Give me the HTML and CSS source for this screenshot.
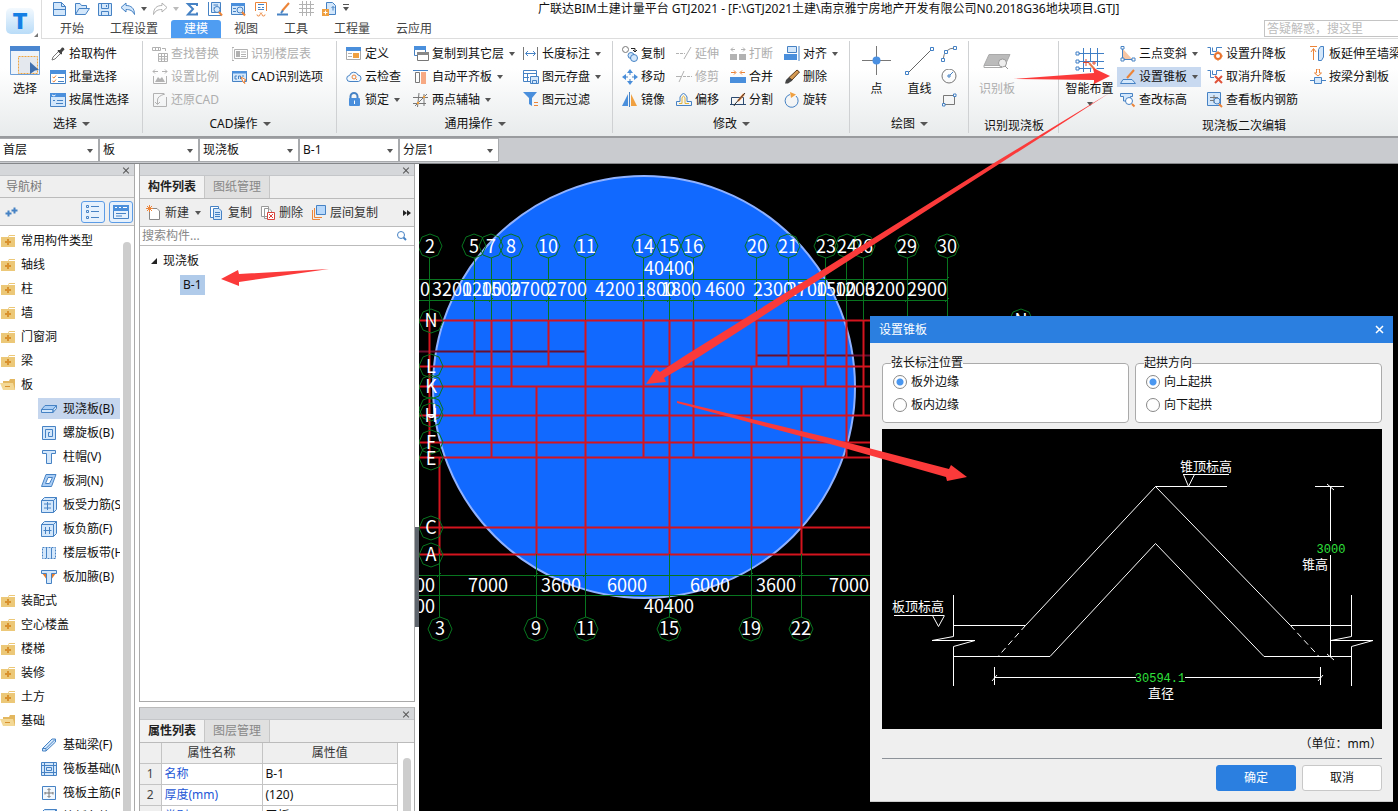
FILE: index.html
```html
<!DOCTYPE html>
<html lang="zh-CN">
<head>
<meta charset="UTF-8">
<meta name="viewport" content="width=device-width, initial-scale=1.0">
<title>广联达BIM土建计量平台 GTJ2021</title>
<link rel="stylesheet" href="styles.css">
</head>
<body>
<div class="app">

  <header class="header">
    <div class="logo">
      <svg class="logo-mark" width="30" height="28" viewBox="0 0 30 28">
        <defs><linearGradient id="logo-bg" x1="0" y1="0" x2="0" y2="1"><stop offset="0" stop-color="#f3f9fe"/><stop offset="1" stop-color="#b9dcf8"/></linearGradient></defs>
        <rect x="1" y="1" width="28" height="26" rx="5" fill="url(#logo-bg)"/>
        <text x="15" y="22" class="logo-letter">T</text>
      </svg>
      <svg class="logo-corner" width="4" height="4"><path d="M4 0V4H0Z" fill="#777"/></svg>
    </div>
    <div class="header-main">
      <div class="titlebar">
        <div class="quick">
          <svg class="icon" viewBox="0 0 16 16"><path class="lt" d="M2.500 1.500H10.500L14.500 5.500V14.500H2.500Z"/><path d="M10.500 1.500V5.500H14.500M2.500 8.500H14.500"/></svg>
          <svg class="icon" viewBox="0 0 16 16"><path class="lt" d="M1.500 13.500V2.500H6L7.500 4.500H12.500V7.500M1.500 13.500L5 7.500H15.500L11.500 13.500Z"/></svg>
          <svg class="icon" viewBox="0 0 16 16"><path class="lt" d="M1.500 2.500H14.500V14.500H1.500Z"/><path d="M4.500 2.500V7.500H11.500V2.500M4.500 14.500V10.500H11.500V14.500M9.500 4V6"/></svg>
          <svg class="icon" viewBox="0 0 16 16"><path class="lt" d="M1 6.500L6 2V4.500C11 4.500 14.500 7 14.500 13.500C12.500 9.500 10 8.500 6 8.500V11Z"/></svg>
          <i class="caret"></i>
          <svg class="icon" viewBox="0 0 16 16"><path class="gy" d="M15 6.500L10 2V4.500C5 4.500 1.500 7 1.500 13.500C3.500 9.500 6 8.500 10 8.500V11Z"/></svg>
          <i class="caret caret-off"></i>
          <svg class="icon" viewBox="0 0 16 16"><path class="thick" d="M13 5V3H4L9 8L4 13.500H13V11.500"/></svg>
          <svg class="icon" viewBox="0 0 16 16"><path class="lt" d="M4.500 1.500H13.500V11.500H4.500Z"/><path d="M1.500 1V14.500H14M6.500 4H11M6.500 7H9"/><circle class="lt" cx="10" cy="8.500" r="3"/><path class="or thick" d="M12 11L15 14.500"/></svg>
          <svg class="icon" viewBox="0 0 16 16"><path class="lt" d="M1.500 2.500H14.500V13.500H1.500Z"/><path class="bl" d="M1 2H15V5H1Z"/><path d="M3 7.500H6M3 10.500H6"/><circle class="lt" cx="10" cy="9" r="3"/><path class="or thick" d="M12 11L15 14.500"/></svg>
          <svg class="icon" viewBox="0 0 16 16"><path class="or" d="M2.500 10V1.500H13.500V10M4 13.500A1.500 1.500 0 1 0 7 13.500L9 11.500M12 13.500A1.500 1.500 0 1 1 9 13.500L7 11.500"/><path d="M5 3.500H11M5 6.500H7.500M9 6.500H11M5 8.500H11"/></svg>
          <svg class="icon" viewBox="0 0 16 16"><path class="or thick" d="M13 2L6 10"/><path class="thick" d="M1 13.500H12M5 12L7 9.500"/></svg>
          <svg class="icon" viewBox="0 0 16 16"><path class="gy" d="M3.500 0V15M7.500 0V15M11.500 0V15M0 3.500H15M0 7.500H15M0 11.500H15"/></svg>
          <svg class="icon" viewBox="0 0 16 16"><path class="lt" d="M4.500 1.500H10.500L13.500 4.500V13.500H4.500Z"/><path d="M11 9.500V5.500M9.500 7L11 5.500L12.500 7"/><path class="orf" d="M0 8H7V15H0Z"/><path stroke="#fff" d="M3.500 9.500V13.500M1.500 11.500H5.500"/></svg>
          <i class="caret caret-line"></i>
        </div>
        <div class="window-title">广联达BIM土建计量平台 GTJ2021 - [F:\GTJ2021土建\南京雅宁房地产开发有限公司N0.2018G36地块项目.GTJ]</div>
      </div>
      <div class="tabbar">
        <nav class="tabs">
          <button class="tab">开始</button>
          <button class="tab">工程设置</button>
          <button class="tab active">建模</button>
          <button class="tab">视图</button>
          <button class="tab">工具</button>
          <button class="tab">工程量</button>
          <button class="tab">云应用</button>
        </nav>
        <input class="help-search" type="text" placeholder="答疑解惑，搜这里" aria-label="答疑解惑">
      </div>
    </div>
  </header>

  <div class="ribbon">
    <section class="group g-select">
      <div class="group-body">
        <button class="big">
          <svg class="icon-big" viewBox="0 0 30 30"><path fill="#eef3f9" stroke="#6d9fd8" d="M.5 .5H29.500V28.500H.5Z"/><path fill="#4a86d0" d="M0 0H30V5H0Z"/><path fill="#e4e8ee" stroke="#f0a43c" stroke-dasharray="2 1" d="M8.500 10.500H27.500V27.500H8.500Z"/><path fill="#3f6fae" d="M20 16L29 24L25 24.500L20 28Z"/></svg>
          选择
        </button>
        <div class="tools">
          <button class="tool"><svg class="icon" viewBox="0 0 16 16"><path class="dk" d="M2 14L3 11L9 5L11 7L5 13Z"/><path class="ink" d="M8 4L10 4L12 1.500Q14 1 14.500 3.500L12 6V8L11 8.500L7.500 5Z"/></svg>拾取构件</button>
          <button class="tool"><svg class="icon" viewBox="0 0 16 16"><path fill="#fff" d="M.5 1.500H15.500V14.500H.5Z"/><path class="bl" d="M0 1H16V5H0Z"/><path class="or" d="M2.500 8L4 9L6 6.500M2.500 12L4 13L6 10.500"/><path d="M8 8.500H14M8 12.500H14"/></svg>批量选择</button>
          <button class="tool"><svg class="icon" viewBox="0 0 16 16"><path class="lt" d="M.5 1.500H15.500V14.500H.5Z"/><path class="bl" d="M0 1H16V5H0Z"/><path stroke="#fff" d="M2 3L4 4L5.500 3"/><path d="M3 8.500H5M7 8.500H13M6 11.500H13"/></svg>按属性选择</button>
        </div>
      </div>
      <div class="group-label">选择<i class="caret"></i></div>
    </section>

    <section class="group g-cad">
      <div class="group-body">
        <div class="tools">
          <button class="tool" disabled><svg class="icon" viewBox="0 0 16 16"><path class="gy" d="M.5 1.500H8.500V4.500H.5ZM3.500 1.500V4.500M6.500 1.500V4.500M10 2.500H13.500V5M6.500 7.500H15.500V15.500H6.500ZM6.500 10.500H15.500M6.500 13H15.500M9.500 7.500V15.500M12.500 7.500V15.500"/></svg>查找替换</button>
          <button class="tool" disabled><svg class="icon" viewBox="0 0 16 16"><path class="gy" d="M1 2.500H6M3 .5L1 2.500L3 4.500M15 2.500H10M13 .5L15 2.500L13 4.500M1.500 7V14.500H14.500V7"/><path class="gyf" d="M3 13L6 8L8 10L10 8L13 13Z"/></svg>设置比例</button>
          <button class="tool" disabled><svg class="icon" viewBox="0 0 16 16"><path class="gy" d="M12 1.500H1.500V14.500H14.500V5M5.500 12V8Q5.500 4 13 2M3 10L5.500 12.500L8 10"/></svg>还原CAD</button>
          <button class="tool" disabled><svg class="icon" viewBox="0 0 16 16"><path class="gy" d="M2.500 3.500H15.500V12.500H2.500ZM2 1.500H0V14.500H2M9 6H14M9 8.500H14M9 10.500H14"/><path class="gyf" d="M4 5H8V11H4Z"/></svg>识别楼层表</button>
          <button class="tool"><svg class="icon" viewBox="0 0 16 16"><path class="lt" d="M.5 2.500H14.500V12.500H.5Z"/><path class="bl" d="M0 2H15V4.500H0Z"/><path d="M5 7H3V10H5M6.500 10V7H8.500V10M10 7H12"/><path fill="#fff" class="or" d="M9 8L14 11L12 12L13 14.500L11 13Z"/></svg>CAD识别选项</button>
        </div>
      </div>
      <div class="group-label">CAD操作<i class="caret"></i></div>
    </section>

    <section class="group g-common">
      <div class="group-body">
        <div class="tools">
          <button class="tool"><svg class="icon" viewBox="0 0 16 16"><path fill="#fff" stroke="#aaa" d="M.5 1.500H14.500V13.500H.5Z"/><path class="bl" d="M0 1H15V5H0Z"/><path class="gyf" d="M2 7H6V8H2ZM2 10H6V11H2Z"/><path class="orf" d="M7 7H13V12H7Z"/></svg>定义</button>
          <button class="tool"><svg class="icon" viewBox="0 0 16 16"><path fill="#f2f8fe" d="M4 12.500A3 3 0 0 1 3.500 6.500A4.500 4.500 0 0 1 12 6A3.300 3.300 0 0 1 12.500 12.500Z"/><circle class="or" cx="8" cy="8" r="2"/><path class="or" d="M9.500 9.500L11 11"/></svg>云检查</button>
          <button class="tool"><svg class="icon" viewBox="0 0 16 16"><path d="M4.500 7V4.500A3.500 3.500 0 0 1 11.500 4.500V7" class="thick"/><rect class="bl" x="3" y="6" width="11" height="8" rx="1"/><path stroke="#fff" d="M8.500 8.500V12"/></svg>锁定<i class="caret"></i></button>
          <button class="tool"><svg class="icon" viewBox="0 0 16 16"><path fill="#fff" d="M1.500 1.500H12.500V9.500H1.500Z"/><path class="bl" d="M1 0H13V4H1Z"/><path fill="#fff" stroke="#777" d="M4.500 7.500H15.500V14.500H4.500Z"/><path class="dkf" d="M4 6H16V9H4Z"/></svg>复制到其它层<i class="caret"></i></button>
          <button class="tool"><svg class="icon" viewBox="0 0 16 16"><path class="dk" d="M2.500 3.500H6.500V13.500H2.500Z"/><path fill="#f7a983" stroke="none" d="M8 3H13V15H8Z"/><path d="M0 1.500H15"/></svg>自动平齐板<i class="caret"></i></button>
          <button class="tool"><svg class="icon" viewBox="0 0 16 16"><path class="dk" d="M0 5.500H15M0 11.500H13M4.500 15L6 1M11 14V2M2 14L14 2"/><circle class="orf" cx="5" cy="11" r="1.200"/><circle class="orf" cx="11" cy="5" r="1.200"/></svg>两点辅轴<i class="caret"></i></button>
          <button class="tool"><svg class="icon" viewBox="0 0 16 16"><path class="dk" d="M.5 1V14M14.500 1V14"/><path d="M3 7.500H12M5 5L2.500 7.500L5 10M10 5L12.500 7.500L10 10"/></svg>长度标注<i class="caret"></i></button>
          <button class="tool"><svg class="icon" viewBox="0 0 16 16"><path fill="#fff" d="M.5 1.500H13.500V12.500H.5ZM.5 4.500H13.500M4.500 4.500V12.500M.5 8.500H6"/><path class="lt" d="M7.500 7.500H15.500V14.500H7.500Z"/><path d="M9.500 14V11.500H13.500V14"/></svg>图元存盘<i class="caret"></i></button>
          <button class="tool"><svg class="icon" viewBox="0 0 16 16"><path class="bl" d="M0 0H14L9 6V14L6 12V6Z"/><path class="or" d="M11 10.500H15M11 13.500H15"/></svg>图元过滤</button>
        </div>
      </div>
      <div class="group-label">通用操作<i class="caret"></i></div>
    </section>

    <section class="group g-modify">
      <div class="group-body">
        <div class="tools">
          <button class="tool"><svg class="icon" viewBox="0 0 16 16"><circle class="dk" cx="3.500" cy="3.500" r="3"/><circle class="lt" cx="9" cy="9.500" r="3"/><circle class="lt" cx="12" cy="12" r="3.500"/><path stroke="#222" d="M9 2.500H13V5.500M11 4L13 6L15 4"/></svg>复制</button>
          <button class="tool"><svg class="icon" viewBox="0 0 16 16"><path class="bl" d="M8 0L11 4H5ZM8 16L11 12H5ZM0 8L4 5V11ZM16 8L12 5V11Z"/><path d="M8 3V6M8 10V13M3 8H6M10 8H13"/></svg>移动</button>
          <button class="tool"><svg class="icon" viewBox="0 0 16 16"><path class="bl" d="M0 14L6 2V14Z"/><path class="orf" d="M9 2V14H15Z"/><path d="M7.500 0V15"/></svg>镜像</button>
          <button class="tool" disabled><svg class="icon" viewBox="0 0 16 16"><path class="gy" stroke-dasharray="3 1" d="M0 7.500H9"/><path class="gy" d="M8 13L15 1"/></svg>延伸</button>
          <button class="tool" disabled><svg class="icon" viewBox="0 0 16 16"><path class="gy" d="M0 7.500H5M3 13L8 2"/><path class="gy" stroke-dasharray="3 1" d="M7 7.500H16"/></svg>修剪</button>
          <button class="tool"><svg class="icon" viewBox="0 0 16 16"><path d="M.5 13.500V9.500H4V5Q7.500 -2 11 5V9.500H15.500V13.500Z"/><path stroke="#e2b53c" d="M3 11.500H6V6Q7.500 2 9 6V11.500H13"/></svg>偏移</button>
          <button class="tool" disabled><svg class="icon" viewBox="0 0 16 16"><path class="gyf" d="M0 8H7V14H0ZM9 8H16V14H9Z"/><path class="gy" d="M1 3.500H5M3 1.500L1 3.500L3 5.500M15 3.500H11M13 1.500L15 3.500L13 5.500"/></svg>打断</button>
          <button class="tool"><svg class="icon" viewBox="0 0 16 16"><path class="bl" d="M0 8H16V14H0Z"/><path class="or" d="M1 3.500H5.500M4 1.500L6 3.500L4 5.500M15 3.500H10.500M12 1.500L10 3.500L12 5.500"/></svg>合并</button>
          <button class="tool"><svg class="icon" viewBox="0 0 16 16"><path stroke="#2c4a70" d="M1.500 5.500H13.500V12.500H1.500ZM0 12.500H16"/><path class="thick or" d="M14 2L8 9"/><path stroke="#333" d="M15 1L5 12L4 14"/></svg>分割</button>
          <button class="tool"><svg class="icon" viewBox="0 0 16 16"><path class="lt" d="M3.500 .5H12.500V6.500H3.500Z"/><path class="bl" d="M0 8H13V14H0Z"/><path d="M15 0V15"/></svg>对齐<i class="caret"></i></button>
          <button class="tool"><svg class="icon" viewBox="0 0 16 16"><path fill="#d59a52" stroke="#5b3a1c" d="M13 1L15.500 3L8 11L5 8.500Z"/><path class="ink" d="M5 8L8.500 11.500L4 14.500H1L2 11Z"/></svg>删除</button>
          <button class="tool"><svg class="icon" viewBox="0 0 16 16"><path d="M6 2.500A6.500 6.500 0 1 0 12 4"/><path class="orf" d="M6 0L12 2.500L7 6Z"/></svg>旋转</button>
        </div>
      </div>
      <div class="group-label">修改<i class="caret"></i></div>
    </section>

    <section class="group g-draw">
      <div class="group-body">
        <button class="big"><svg class="icon-big" viewBox="0 0 30 30"><path stroke="#777" d="M14.500 0V29M0 14.500H29"/><circle cx="14.500" cy="14.500" r="4" fill="#4a90e2"/></svg>点</button>
        <button class="big"><svg class="icon-big" viewBox="0 0 30 30"><path stroke="#666" d="M3 27L27 3"/><path fill="#fff" stroke="#3f7fc6" d="M.5 25.500H3.500V28.500H.5ZM25.500 1.500H28.500V4.500H25.500Z"/></svg>直线</button>
        <div class="tools">
          <button class="tool" aria-label="弧线"><svg class="icon" viewBox="0 0 16 16"><path class="dk" d="M2 14Q3 2 14 2"/><path fill="#fff" d="M.5 12.500H3.500V15.500H.5ZM3.500 4.500H6.500V7.500H3.500ZM12.500 .5H15.500V3.500H12.500Z"/></svg></button>
          <button class="tool" aria-label="圆"><svg class="icon" viewBox="0 0 16 16"><circle class="dk" cx="8" cy="7" r="7"/><path fill="#fff" d="M7 6H9V8H7Z"/><path d="M9 6L12 3"/></svg></button>
          <button class="tool" aria-label="矩形"><svg class="icon" viewBox="0 0 16 16"><path class="dk" d="M2.500 3.500H13.500V12.500H2.500Z"/><path fill="#fff" d="M1.500 11.500H4V14H1.500ZM12.500 2H15V4.500H12.500Z"/></svg></button>
        </div>
      </div>
      <div class="group-label">绘图<i class="caret"></i></div>
    </section>

    <section class="group g-detect">
      <div class="group-body">
        <button class="big" disabled><svg class="icon-big" viewBox="0 0 30 30"><path fill="#bbb" stroke="#aaa" d="M7 8.500H28L23 19.500H2Z"/><path stroke="#aaa" d="M2 19.500V21.500H20"/><circle cx="20.500" cy="17" r="4" fill="#eee" stroke="#999"/><path stroke="#999" d="M23 20L26 23"/></svg>识别板</button>
      </div>
      <div class="group-label low">识别现浇板</div>
    </section>

    <section class="group g-slab">
      <div class="group-body">
        <button class="big"><svg class="icon-big" viewBox="0 0 30 30"><path stroke="#3f7fc6" d="M2 7.500H29M2 15.500H29M2 22.500H29M8.500 2V26M15.500 2V26M22.500 2V20"/><path fill="#fff" stroke="#3f7fc6" d="M1 6H4V9H1ZM1 14H4V17H1ZM1 21H4V24H1Z"/><path stroke="#fff" stroke-width="4" d="M14 17L22 26"/><path stroke="#e77b4a" stroke-width="2" d="M14 17L22 26"/><path stroke="#e04b32" d="M11 13V20M8 16.500H14M19 15V19M17 17H21"/></svg>智能布置<i class="caret"></i></button>
        <div class="tools">
          <button class="tool"><svg class="icon" viewBox="0 0 16 16"><path fill="#f7c6a4" stroke="none" d="M3 3L12 13H3Z"/><path d="M2.500 1V13.500H14"/><path fill="#fff" d="M1 .5H4V3H1ZM1 12H4V15H1ZM12 12H15V15H12Z"/></svg>三点变斜<i class="caret"></i></button>
          <button class="tool selected"><svg class="icon" viewBox="0 0 16 16"><path class="thick or" d="M14 1L7 9"/><path class="lt" d="M.5 14.500L3 10.500H12L15.500 14.500Z"/></svg>设置锥板<i class="caret"></i></button>
          <button class="tool"><svg class="icon" viewBox="0 0 16 16"><path class="lt" d="M.5 1.500H12.500V4.500H10.500V9H3.500V4.500H.5Z"/><circle fill="#fff" cx="9" cy="9" r="3.500"/><path class="or thick" d="M12 12L14.500 14.500"/></svg>查改标高</button>
          <button class="tool"><svg class="icon" viewBox="0 0 16 16"><path d="M.5 1.500H3.500V8.500H7M5.500 1.500V5.500H9.500V1.500H15"/><circle cx="11" cy="10" r="3" stroke="#e8702c" stroke-width="2"/><path class="or" d="M11 5V7M11 13V15M6.500 10H8M14 10H16M8 7L9 8M14 7L13 8M8 13L9 12M14 13L13 12"/></svg>设置升降板</button>
          <button class="tool"><svg class="icon" viewBox="0 0 16 16"><path d="M.5 1.500H3.500V8.500H7M5.500 1.500V5.500H9.500V1.500H15"/><path stroke="#e0533a" stroke-width="2" d="M8 7L15 14M15 7L8 14"/></svg>取消升降板</button>
          <button class="tool"><svg class="icon" viewBox="0 0 16 16"><path class="lt" d="M.5 .5H13.500V13.500H.5Z"/><path class="dk" d="M7 3V11M3 5.500H11M3 8.500H7"/><circle class="lt" cx="10" cy="9" r="3"/><path class="or thick" d="M12 12L15 15"/></svg>查看板内钢筋</button>
          <button class="tool"><svg class="icon" viewBox="0 0 16 16"><path class="or" d="M3.500 14V3M1 6L3.500 2.500L6 6M0 .5H7"/><path class="lt" d="M8.500 3.500L10.500 .5H13.500V11L11.500 14.500H8.500Z"/></svg>板延伸至墙梁</button>
          <button class="tool"><svg class="icon" viewBox="0 0 16 16"><path class="or" d="M6.500 0H9.500V4H11.500L8 7L4.500 4H6.500Z"/><path class="lt" d="M4.500 8.500H11.500V14.500H4.500Z"/><path d="M0 11.500H4M12 11.500H16"/></svg>按梁分割板</button>
        </div>
      </div>
      <div class="group-label low">现浇板二次编辑</div>
    </section>
  </div>

  <div class="pickers">
    <div class="picker"><select aria-label="楼层"><option>首层</option></select></div>
    <div class="picker"><select aria-label="构件大类"><option>板</option></select></div>
    <div class="picker"><select aria-label="构件类型"><option>现浇板</option></select></div>
    <div class="picker"><select aria-label="构件"><option>B-1</option></select></div>
    <div class="picker"><select aria-label="分层"><option>分层1</option></select></div>
  </div>

  <main class="workspace">
    <aside class="nav-panel">
      <div class="strip"><button class="strip-close" aria-label="关闭导航树"></button></div>
      <div class="nav-title">导航树</div>
      <div class="nav-tools">
        <svg class="icon nav-plus" viewBox="0 0 16 16"><path class="thick" d="M4.500 6.500V12.500M1.500 9.500H7.500M10.500 3.500V9.500M7.500 6.500H13.500"/></svg>
        <button class="view-btn" aria-label="列表视图"><svg class="icon" viewBox="0 0 16 16"><path d="M1.500 1.500H3.500V3.500H1.500ZM1.500 6.500H3.500V8.500H1.500ZM1.500 12.500H3.500V14.500H1.500ZM6 2.500H14M6 7.500H14M6 13.500H14"/></svg></button>
        <button class="view-btn" aria-label="分类视图"><svg class="icon" viewBox="0 0 16 16"><path d="M.5 1.500H15.500V14.500H.5Z"/><path class="bl" d="M0 1H16V7H0Z"/><path stroke="#fff" d="M2 3.500H4M6 3.500H8M10 3.500H14"/><path d="M3 9.500H13M3 12H9"/></svg></button>
      </div>
      <div class="nav-scroll">
        <ul class="tree">
          <li><svg class="icon folder" viewBox="0 0 16 16"><use href="#folder"/></svg>常用构件类型</li>
          <li><svg class="icon folder" viewBox="0 0 16 16"><use href="#folder"/></svg>轴线</li>
          <li><svg class="icon folder" viewBox="0 0 16 16"><use href="#folder"/></svg>柱</li>
          <li><svg class="icon folder" viewBox="0 0 16 16"><use href="#folder"/></svg>墙</li>
          <li><svg class="icon folder" viewBox="0 0 16 16"><use href="#folder"/></svg>门窗洞</li>
          <li><svg class="icon folder" viewBox="0 0 16 16"><use href="#folder"/></svg>梁</li>
          <li><svg class="icon folder" viewBox="0 0 16 16"><use href="#folder-open"/></svg>板</li>
          <li class="child current"><svg class="icon" viewBox="0 0 16 16"><path fill="#a9cdf5" d="M4 4.500H15.500L12 8.500H.5Z"/><path class="lt" d="M.5 8.500H12V11.500H.5ZM12 8.500L15.500 4.500V7.500L12 11.500Z"/></svg>现浇板(B)</li>
          <li class="child"><svg class="icon" viewBox="0 0 16 16"><path class="lt" d="M1.500 1.500H14.500V14.500H1.500Z"/><path d="M4.500 13V4.500H11.500V11.500H7.500V7.500H9"/></svg>螺旋板(B)</li>
          <li class="child"><svg class="icon" viewBox="0 0 16 16"><path class="lt" d="M1.500 1.500H14.500V4.500H10.500V14.500H5.500V4.500H1.500Z"/></svg>柱帽(V)</li>
          <li class="child"><svg class="icon" viewBox="0 0 16 16"><path fill="#a9cdf5" d="M5 1.500H15L10.500 13.500H.5Z"/><path fill="#fff" d="M7 4.500H11.500L8.500 10.500H4.500Z"/></svg>板洞(N)</li>
          <li class="child"><svg class="icon" viewBox="0 0 16 16"><path class="lt" d="M.5 3.500H12.500V15.500H.5ZM.5 3.500L3.500 .5H15.500V12.500L12.500 15.500M12.500 3.500L15.500 .5"/><path d="M3 7H10M3 11H10M6.500 5V13"/></svg>板受力筋(S)</li>
          <li class="child"><svg class="icon" viewBox="0 0 16 16"><path class="lt" d="M.5 3.500H12.500V15.500H.5ZM.5 3.500L3.500 .5H15.500V12.500L12.500 15.500M12.500 3.500L15.500 .5"/><path d="M2.500 9.500H10.500M4.500 6V13M8.500 6V13"/></svg>板负筋(F)</li>
          <li class="child"><svg class="icon" viewBox="0 0 16 16"><path class="lt" stroke-dasharray="2 1" d="M1.500 2.500H14.500V13.500H1.500Z"/><path d="M5.500 3V13M10.500 3V13"/></svg>楼层板带(H)</li>
          <li class="child"><svg class="icon" viewBox="0 0 16 16"><path fill="#e87f2e" stroke="none" d="M1 4L6 11V4ZM15 4L10 11V4Z"/><path class="lt" d="M.5 1.500H15.500V4.500H10.500V14.500H5.500V4.500H.5Z"/></svg>板加腋(B)</li>
          <li><svg class="icon folder" viewBox="0 0 16 16"><use href="#folder"/></svg>装配式</li>
          <li><svg class="icon folder" viewBox="0 0 16 16"><use href="#folder"/></svg>空心楼盖</li>
          <li><svg class="icon folder" viewBox="0 0 16 16"><use href="#folder"/></svg>楼梯</li>
          <li><svg class="icon folder" viewBox="0 0 16 16"><use href="#folder"/></svg>装修</li>
          <li><svg class="icon folder" viewBox="0 0 16 16"><use href="#folder"/></svg>土方</li>
          <li><svg class="icon folder" viewBox="0 0 16 16"><use href="#folder-open"/></svg>基础</li>
          <li class="child"><svg class="icon" viewBox="0 0 16 16"><path class="lt" d="M1.500 11.500L11 2H14.500V5L5 14H1.500ZM1.500 11.500H5V14M5 11.500L14 2.500"/></svg>基础梁(F)</li>
          <li class="child"><svg class="icon" viewBox="0 0 16 16"><path class="lt" d="M.5 1.500H15.500V14.500H.5ZM3.500 1.500V14.500M12.500 1.500V14.500M.5 4.500H15.500M.5 11.500H15.500M5.500 6.500H10.500V9.500H5.500Z"/></svg>筏板基础(M)</li>
          <li class="child"><svg class="icon" viewBox="0 0 16 16"><path fill="#f2f8fe" d="M1.500 1.500H14.500V14.500H1.500Z"/><path class="dk" d="M8 4V12M4 8H12M6.500 5L8 3.500L9.500 5M6.500 11L8 12.500L9.500 11M4 7V9.500M12 7V9.500"/></svg>筏板主筋(R)</li>
          <li class="child"><svg class="icon" viewBox="0 0 16 16"><path class="lt" d="M.5 3.500H12.500V15.500H.5ZM.5 3.500L3.500 .5H15.500V12.500L12.500 15.500M12.500 3.500L15.500 .5"/></svg>筏板负筋(X)</li>
        </ul>
        <div class="thumb"></div>
      </div>
    </aside>

    <div class="side">
      <section class="panel components">
        <div class="strip"><button class="strip-close" aria-label="关闭构件列表"></button></div>
        <div class="panel-tabs"><button class="panel-tab on">构件列表</button><button class="panel-tab">图纸管理</button></div>
        <div class="panel-tools">
          <button class="ptool"><svg class="icon" viewBox="0 0 16 16"><path fill="#fff" stroke="#888" d="M4.500 3.500H11L13.500 6V14.500H3.500V6"/><path class="or" d="M3.500 0V7M0 3.500H7M1 1L6 6M6 1L1 6"/></svg>新建<i class="caret"></i></button>
          <button class="ptool"><svg class="icon" viewBox="0 0 16 16"><path fill="#fff" d="M1.500 1.500H9.500V12.500H1.500Z"/><path class="lt" d="M4.500 3.500H10L12.500 6V14.500H4.500Z"/><path d="M6 7.500H11M6 9.500H11M6 11.500H11"/></svg>复制</button>
          <button class="ptool"><svg class="icon" viewBox="0 0 16 16"><path stroke="#999" fill="#fff" d="M1.500 1.500H8.500V11.500H1.500ZM4.500 3.500H9L11.500 6V13.500H4.500Z"/><path fill="#fff" stroke="#d8433c" d="M7.500 7.500H14.500V14.500H7.500Z"/><path stroke="#d8433c" d="M9 9L13 13M13 9L9 13"/></svg>删除</button>
          <button class="ptool"><svg class="icon" viewBox="0 0 16 16"><path class="or" d="M1.500 5V14.500H9M3.500 3V12.500H11"/><path fill="#b7d8fb" d="M5.500 .5H14.500V9.500H5.500Z"/></svg>层间复制</button>
          <svg class="more" width="8" height="6"><path d="M0 0L4 3L0 6ZM4 0L8 3L4 6Z" fill="#222"/></svg>
        </div>
        <div class="find">
          <input type="text" placeholder="搜索构件..." aria-label="搜索构件">
          <svg class="icon" viewBox="0 0 16 16"><circle cx="7" cy="7" r="3.500"/><path class="thick" d="M9.500 9.500L12 12"/></svg>
        </div>
        <ul class="component-tree">
          <li><svg width="7" height="7"><path d="M6 0V6H0Z" fill="#222"/></svg>现浇板
            <ul><li><span class="picked">B-1</span></li></ul>
          </li>
        </ul>
      </section>

      <section class="panel properties">
        <div class="strip"><button class="strip-close" aria-label="关闭属性列表"></button></div>
        <div class="panel-tabs"><button class="panel-tab on">属性列表</button><button class="panel-tab">图层管理</button></div>
        <div class="prop-scroll">
          <table class="props">
            <thead><tr><th class="no"></th><th class="name">属性名称</th><th>属性值</th></tr></thead>
            <tbody>
              <tr><td class="no">1</td><td class="name">名称</td><td>B-1</td></tr>
              <tr><td class="no">2</td><td class="name">厚度(mm)</td><td>(120)</td></tr>
              <tr><td class="no">3</td><td class="name">类别</td><td>平板</td></tr>
            </tbody>
          </table>
          <div class="thumb"></div>
        </div>
      </section>
    </div>

    <div class="canvas">
      <div class="splitter"></div>
      <svg class="drawing" width="979" height="647" viewBox="419 164 979 647">
        <circle class="slab" cx="644" cy="387" r="211"/>
        <!-- axes -->
        <path class="axis dim-red" d="M419 351.500H585M757 355.500H870"/>
        <path class="axis" d="M419 320.500H870M419 366.500H870M419 386.500H870M419 415.500H870M419 442.500H870M419 457.500H870M419 527.500H870M419 554.500H870"/>
        <path class="axis" d="M429.500 320V457M474.500 320V415M491.500 320V457M511.500 320V386M548.500 320V366M585.500 320V554M643.500 320V457M669.500 320V554M693.500 320V457M756.500 320V366M788.500 320V366M825.500 320V386M846.500 320V457M863.500 320V415M439.500 457V554M536.500 386V554M751.500 366V554M801.500 386V554"/>
        <path class="guide" d="M419 279.500H947M419 300.500H947M419 575.500H870M419 595.500H870"/>
        <path class="guide" d="M429.500 258V320M474.500 258V320M491.500 258V320M511.500 258V320M548.500 258V320M585.500 258V320M643.500 258V320M669.500 258V320M693.500 258V320M756.500 258V320M788.500 258V320M825.500 258V320M846.500 258V320M863.500 258V320M907.500 258V320M947.500 258V320"/>
        <path class="guide" d="M439.500 554V617M536.500 554V617M585.500 554V617M669.500 554V617M751.500 554V617M801.500 554V617"/>
        <path class="tick" d="M472 302L476 298M489 302L493 298M546 302L550 298M583 302L587 298M641 302L645 298M667 302L671 298M691 302L695 298M754 302L758 298M786 302L790 298M905 302L909 298M945 302L949 298M945 281L949 277M437 577L441 573M534 577L538 573M583 577L587 573M749 577L753 573M799 577L803 573"/>
        <g class="bubbles">
          <use href="#bubble" x="430" y="246"/><use href="#bubble" x="474" y="246"/><use href="#bubble" x="491" y="246"/><use href="#bubble" x="511" y="246"/><use href="#bubble" x="548" y="246"/><use href="#bubble" x="586" y="246"/><use href="#bubble" x="644" y="246"/><use href="#bubble" x="669" y="246"/><use href="#bubble" x="693" y="246"/><use href="#bubble" x="757" y="246"/><use href="#bubble" x="788" y="246"/><use href="#bubble" x="826" y="246"/><use href="#bubble" x="847" y="246"/><use href="#bubble" x="863" y="246"/><use href="#bubble" x="907" y="246"/><use href="#bubble" x="947" y="246"/>
          <use href="#bubble" x="431" y="321"/><use href="#bubble" x="431" y="366"/><use href="#bubble" x="431" y="387"/><use href="#bubble" x="431" y="409"/><use href="#bubble" x="431" y="415"/><use href="#bubble" x="431" y="442"/><use href="#bubble" x="431" y="458"/><use href="#bubble" x="431" y="528"/><use href="#bubble" x="431" y="555"/><use href="#bubble" x="1021" y="321"/>
          <use href="#bubble" x="440" y="629"/><use href="#bubble" x="536" y="629"/><use href="#bubble" x="586" y="629"/><use href="#bubble" x="669" y="629"/><use href="#bubble" x="751" y="629"/><use href="#bubble" x="801" y="629"/>
        </g>
        <g class="cad-text">
          <text x="430" y="253">2</text><text x="474" y="253">5</text><text x="491" y="253">7</text><text x="511" y="253">8</text><text x="548" y="253">10</text><text x="586" y="253">11</text><text x="644" y="253">14</text><text x="669" y="253">15</text><text x="693" y="253">16</text><text x="757" y="253">20</text><text x="788" y="253">21</text><text x="826" y="253">23</text><text x="847" y="253">24</text><text x="863" y="253">26</text><text x="907" y="253">29</text><text x="947" y="253">30</text>
          <text x="669" y="275">40400</text>
          <text x="425" y="296">0</text><text x="452" y="296">3200</text><text x="482" y="296">1200</text><text x="501" y="296">1500</text><text x="530" y="296">2700</text><text x="567" y="296">2700</text><text x="615" y="296">4200</text><text x="656" y="296">1800</text><text x="681" y="296">1800</text><text x="725" y="296">4600</text><text x="773" y="296">2300</text><text x="807" y="296">2700</text><text x="836" y="296">1500</text><text x="855" y="296">1200</text><text x="885" y="296">3200</text><text x="927" y="296">2900</text>
          <text x="431" y="327">N</text><text x="431" y="373">L</text><text x="431" y="393">K</text><text x="432" y="418">J</text><text x="431" y="422">H</text><text x="431" y="449">F</text><text x="431" y="465">E</text><text x="431" y="534">C</text><text x="431" y="561">A</text><text x="1021" y="327">N</text>
          <text x="415" y="592">7000</text><text x="488" y="592">7000</text><text x="561" y="592">3600</text><text x="627" y="592">6000</text><text x="710" y="592">6000</text><text x="776" y="592">3600</text><text x="849" y="592">7000</text>
          <text x="410" y="613">40400</text><text x="669" y="613">40400</text>
          <text x="440" y="635">3</text><text x="536" y="635">9</text><text x="586" y="635">11</text><text x="669" y="635">15</text><text x="751" y="635">19</text><text x="801" y="635">22</text>
        </g>
      </svg>

      <form class="dialog">
        <div class="dialog-title"><span>设置锥板</span><button type="button" class="dialog-close" aria-label="关闭"><svg width="9" height="9"><path d="M1 1L8 8M8 1L1 8" stroke="#fff" stroke-width="1.500"/></svg></button></div>
        <div class="dialog-body">
          <div class="options">
            <fieldset>
              <legend>弦长标注位置</legend>
              <label><input type="radio" name="edge" checked>板外边缘</label>
              <label><input type="radio" name="edge">板内边缘</label>
            </fieldset>
            <fieldset>
              <legend>起拱方向</legend>
              <label><input type="radio" name="dir" checked>向上起拱</label>
              <label><input type="radio" name="dir">向下起拱</label>
            </fieldset>
          </div>
          <svg class="section" viewBox="0 0 500 300">
            <path d="M143.500 196.500L273.500 57.500L408.500 196.500M168 227.500L273.500 114.500L382 227.500"/>
            <path stroke-dasharray="6 4" d="M143.500 196.500L116 227.500M408.500 196.500L437 227.500"/>
            <path d="M71.500 196.500H143.500M71.500 227.500H168M408.500 196.500H469.500M382 227.500H469.500M273.500 57.500H345"/>
            <path d="M71.500 166V207.500L50 211.500H93L71.500 217.500V257M469.500 166V207.500L449 211.500H491L469.500 217.500V257"/>
            <path d="M301 45.500H347M301.500 45.500L306.500 57.500L312.500 45.500M12 186.500H62M50.500 186.500L56.500 197.500L62.500 186.500"/>
            <path d="M433 57.500H462M448.500 57.500V112M448.500 126V227.500M445 55L452 61M445 225L452 231"/>
            <path d="M112.500 238V256M438.500 238V256M112.500 248.500H254M303 248.500H438.500M110 252L115 246M436 252L441 246"/>
            <text x="298" y="42">锥顶标高</text>
            <text x="10" y="182">板顶标高</text>
            <text x="420" y="140">锥高</text>
            <text x="266" y="269">直径</text>
            <text class="value" x="449" y="124">3000</text>
            <text class="value" x="278" y="253">30594.1</text>
          </svg>
          <p class="unit">（单位：mm）</p>
          <div class="actions"><button type="button" class="btn primary">确定</button><button type="button" class="btn">取消</button></div>
        </div>
      </form>
    </div>
  </main>

  <!-- marker arrows -->
  <svg class="arrows">
    <path d="M1013 79L1094 73L1093 68L1110 76L1094 84V80Z"/>
    <path d="M1111 92L996 166L688 364L664 378L666 382L646 384L656 369L660 372L686 355L994 163Z"/>
    <path d="M677 401L830 438L949 469L951 465L967 477L947 481L946 477L830 444L677 403Z"/>
    <path d="M329 269L239 274L238 270L221 279L239 286V282Z"/>
  </svg>

  <svg class="defs" width="0" height="0">
    <symbol id="folder" viewBox="0 0 16 16"><path fill="#ecc878" stroke="none" d="M1 4H8L9 2H15V14H1Z"/><path stroke="#fff" d="M9 3.500H15"/><path stroke="#d8912e" stroke-width="2" d="M8 6V12M5 9H11"/></symbol>
    <symbol id="folder-open" viewBox="0 0 16 16"><path fill="#e3b75f" stroke="none" d="M3 4H9L10 2H15V13H3Z"/><path fill="#f3d895" stroke="none" d="M0 6H13L15 13H3Z"/><path stroke="#d8912e" d="M5 9.500H10"/></symbol>
    <symbol id="bubble" overflow="visible"><path d="M0 -12L8 -9L12 0L8 9L0 12L-8 9L-12 0L-8 -9Z"/></symbol>
  </svg>
</div>
</body>
</html>
```

FILE: styles.css
```css
* {
  box-sizing: border-box;
}

body {
  margin: 0;
  font-family: "Noto Sans", "Noto Sans CJK SC", sans-serif;
  font-size: 12px;
  line-height: 18px;
  color: #111;
  background: #fff;
}

button, input, select {
  font: inherit;
  color: inherit;
}

button {
  border: none;
  background: none;
  padding: 0;
  white-space: nowrap;
}

ul {
  list-style: none;
  margin: 0;
  padding: 0;
}

.app {
  position: relative;
  display: flex;
  flex-direction: column;
  height: 100vh;
  overflow: hidden;
}

/* icons */
.icon {
  flex: none;
  width: 16px;
  height: 16px;
  fill: none;
  stroke: #4682c4;
}
.icon-big {
  flex: none;
  width: 30px;
  height: 30px;
  fill: none;
}
.lt { fill: #d3e7fb; }
.bl { fill: #4a8fdc; stroke: none; }
.or { stroke: #ec8438; }
.orf { fill: #f0a040; stroke: none; }
.gy { stroke: #b2b2b2; }
.gyf { fill: #b2b2b2; stroke: none; }
.dk { stroke: #777; }
.dkf { fill: #888; stroke: none; }
.ink { fill: #444; stroke: none; }
.thick { stroke-width: 2; }

.caret {
  flex: none;
  width: 0;
  height: 0;
  border: 3px solid transparent;
  border-top: 4px solid #555;
  border-bottom: none;
}
.caret-off { border-top-color: #bbb; }
.caret-line { position: relative; }
.caret-line::before {
  content: "";
  position: absolute;
  left: -3px;
  top: -7px;
  width: 6px;
  height: 1px;
  background: #555;
}

/* header */
.header {
  display: flex;
  flex: none;
}
.logo {
  position: relative;
  width: 42px;
  padding: 7px 0 0 5px;
  border-right: 1px solid #ddd;
}
.logo-mark {
  display: block;
}
.logo-letter {
  font-family: Inter, sans-serif;
  font-size: 22px;
  font-weight: 900;
  fill: #1680e4;
  text-anchor: middle;
}
.logo-corner {
  position: absolute;
  right: 3px;
  bottom: 2px;
}
.header-main {
  flex: 1;
  min-width: 0;
  border-bottom: 1px solid #ddd;
}
.titlebar {
  display: flex;
  align-items: center;
  height: 18px;
  white-space: nowrap;
}
.quick {
  display: flex;
  align-items: center;
  flex: none;
  gap: 7px;
  width: 496px;
  padding-left: 9px;
}
.quick .caret {
  margin: 0 -2px;
}
.tabbar {
  display: flex;
  justify-content: space-between;
  height: 20px;
  padding-top: 2px;
}
.tabs {
  display: flex;
  padding-left: 5px;
}
.tab {
  padding: 0 13px;
  color: #444;
}
.tab.active {
  color: #fff;
  background: #4f9df2;
  border-radius: 3px 3px 0 0;
}
.help-search {
  width: 134px;
  height: 17px;
  padding: 0 2px;
  border: 1px solid #c4c4c4;
  border-right: none;
}
.help-search::placeholder {
  color: #bbb;
}

/* ribbon */
.ribbon {
  display: flex;
  flex: none;
  height: 99px;
  overflow: hidden;
  background: linear-gradient(#fff 30%, #e8ebec);
  border-bottom: 2px solid #999b9e;
}
.group {
  display: flex;
  flex-direction: column;
  flex: none;
  position: relative;
  padding-top: 3px;
}
.group::after {
  content: "";
  position: absolute;
  right: 0;
  top: 2px;
  bottom: 3px;
  border-right: 1px solid #cfd1d3;
}
.group-body {
  display: flex;
  height: 69px;
}
.group-label {
  display: flex;
  align-items: center;
  justify-content: center;
  gap: 5px;
  height: 25px;
}
.group-label.low {
  padding-top: 5px;
}
.group-label .caret {
  border-width: 4px 4px 0;
}
.g-select { width: 143px; }
.g-cad { width: 194px; }
.g-common { width: 276px; }
.g-modify { width: 237px; }
.g-draw { width: 119px; }
.g-detect { width: 90px; }
.g-slab { width: 370px; }

.tools {
  display: grid;
  grid-auto-flow: column;
  grid-template-rows: repeat(3, 23px);
  justify-content: start;
  justify-items: start;
  align-items: center;
}
.tool {
  display: flex;
  align-items: center;
  gap: 3px;
  height: 20px;
}
.tool .caret {
  margin-left: 2px;
}
.tool:disabled, .big:disabled {
  color: #aeaeae;
}
.tool.selected {
  margin-left: -3px;
  padding: 0 3px;
  background: #c8d9f0;
}
.big {
  display: flex;
  flex-direction: column;
  align-items: center;
  padding-top: 4px;
}
.big svg {
  margin-bottom: 4px;
}
.big .caret {
  margin-top: 4px;
}
.g-select .big { width: 50px; }
.g-cad .tools {
  padding-left: 9px;
  grid-template-columns: 80px auto;
}
.g-common .tools {
  padding-left: 9px;
  grid-template-columns: 67px 110px auto;
}
.g-modify .tools {
  padding-left: 9px;
  grid-template-columns: 54px 54px 54px auto;
}
.g-draw .group-body { padding-left: 5px; }
.g-draw .big { width: 43px; }
.g-detect .big { width: 56px; }
.g-slab .big { width: 61px; }
.g-slab .tools { grid-template-columns: 87px 103px auto; }

/* pickers */
.pickers {
  display: flex;
  flex: none;
  gap: 2px;
  height: 26px;
  padding: 1px 0 2px;
  background: #c9cbcf;
  border-bottom: 1px solid #85878a;
}
.picker {
  position: relative;
  width: 98px;
  height: 22px;
  background: #fff;
  outline: 1px solid #a8aaad;
}
.picker::after {
  content: "";
  position: absolute;
  right: 5px;
  top: 10px;
  border: 3px solid transparent;
  border-top: 4px solid #555;
  border-bottom: none;
}
.picker select {
  width: 100%;
  height: 100%;
  padding: 0 3px;
  border: none;
  background: none;
  appearance: none;
}

/* workspace */
.workspace {
  display: flex;
  flex: 1;
  min-height: 0;
  gap: 4px;
}
.strip {
  display: flex;
  justify-content: flex-end;
  align-items: center;
  flex: none;
  height: 12px;
  padding-right: 4px;
  background: #d5d7da;
  border-bottom: 1px solid #c4c6c9;
}
.strip-close {
  position: relative;
  width: 8px;
  height: 8px;
}
.strip-close::before, .strip-close::after {
  content: "";
  position: absolute;
  left: 0;
  top: 4px;
  width: 8px;
  height: 1px;
  background: #555;
  transform: rotate(45deg);
}
.strip-close::after {
  transform: rotate(-45deg);
}
.thumb {
  flex: none;
  width: 8px;
  border-radius: 4px 4px 0 0;
  background: #cdcdcd;
}

.nav-panel {
  display: flex;
  flex-direction: column;
  flex: none;
  width: 135px;
  border-right: 1px solid #aaa;
}
.nav-title {
  flex: none;
  height: 22px;
  padding: 2px 6px;
  color: #777;
  background: #efefef;
  border-bottom: 1px solid #bbb;
}
.nav-tools {
  display: flex;
  align-items: center;
  flex: none;
  gap: 4px;
  height: 28px;
  padding: 0 1px 0 4px;
  background: #efefef;
  border-bottom: 1px solid #bbb;
}
.nav-plus {
  margin-right: auto;
}
.view-btn {
  display: flex;
  align-items: center;
  justify-content: center;
  width: 24px;
  height: 22px;
  border: 1px solid #5c9ce6;
  border-radius: 3px;
  background: #e6f1fd;
}
.nav-scroll {
  display: flex;
  flex: 1;
  min-height: 0;
  padding-right: 3px;
}
.tree {
  display: flex;
  flex-direction: column;
  flex: 1;
  min-width: 0;
  margin-right: 3px;
  padding-top: 3px;
  overflow: hidden;
}
.tree li {
  display: flex;
  align-items: center;
  flex: none;
  gap: 5px;
  height: 24px;
  white-space: nowrap;
}
.tree .child {
  height: 21px;
  margin: 1px 0 2px 38px;
  padding-left: 3px;
  gap: 6px;
}
.tree .child.current {
  background: #c5d6ee;
}
.nav-scroll .thumb {
  margin-top: 16px;
}

.side {
  display: flex;
  flex-direction: column;
  flex: none;
  gap: 5px;
  width: 276px;
}
.panel {
  display: flex;
  flex-direction: column;
  border: 1px solid #aaa;
  border-top: none;
}
.components {
  flex: 1;
  min-height: 0;
}
.properties {
  height: 104px;
  border-top: 1px solid #bbb;
  border-bottom: none;
}
.panel-tabs {
  display: flex;
  flex: none;
  height: 23px;
  background: #efefef;
  border-bottom: 1px solid #bbb;
}
.panel-tab {
  padding: 0 8px;
  color: #888;
  background: #e0e0e0;
  border-right: 1px solid #c6c6c6;
}
.panel-tab.on {
  font-weight: bold;
  color: #222;
  background: #f2f2f2;
}
.panel-tools {
  display: flex;
  align-items: center;
  flex: none;
  gap: 8px;
  height: 28px;
  padding: 0 3px 0 6px;
  color: #333;
  background: #efefef;
  border-bottom: 1px solid #bbb;
}
.ptool {
  display: flex;
  align-items: center;
  gap: 3px;
}
.ptool .caret {
  margin-left: 3px;
}
.more {
  margin-left: auto;
}
.find {
  display: flex;
  align-items: center;
  flex: none;
  height: 19px;
  padding-right: 4px;
  border-bottom: 1px solid #bbb;
}
.find input {
  flex: 1;
  min-width: 0;
  height: 18px;
  padding: 0 2px;
  border: none;
}
.find input::placeholder {
  color: #888;
}
.component-tree {
  padding: 5px 11px;
  line-height: 20px;
}
.component-tree svg {
  margin-right: 5px;
}
.component-tree ul {
  padding: 4px 0 0 29px;
}
.picked {
  display: inline-block;
  padding: 0 3px;
  background: #b0cbea;
}

.prop-scroll {
  display: flex;
  flex: 1;
  min-height: 0;
  overflow: hidden;
  gap: 5px;
}
.prop-scroll .thumb {
  margin-top: 15px;
}
.props {
  width: 258px;
  table-layout: fixed;
  border-collapse: collapse;
}
.props th, .props td {
  height: 21px;
  padding: 0 3px;
  text-align: left;
  font-weight: normal;
  border: 1px solid #c4c4c4;
  border-top: none;
}
.props th:first-child, .props td:first-child {
  border-left: none;
}
.props th {
  height: 20px;
  text-align: center;
  color: #333;
  background: #efefef;
}
.props th.name { width: 101px; }
.props .no {
  width: 21px;
  text-align: center;
  color: #444;
  background: #efefef;
}
.props td.name {
  color: #2457d6;
}

/* drawing */
.canvas {
  position: relative;
  flex: 1;
  min-width: 0;
  background: #000;
}
.splitter {
  position: absolute;
  left: -4px;
  top: 363px;
  width: 4px;
  height: 100px;
  background: #5f656d;
}
.drawing {
  position: absolute;
  left: 0;
  top: 0;
}
.slab {
  fill: #1169ff;
  stroke: #90b2ff;
  stroke-width: 2;
}
.axis, .guide {
  fill: none;
  stroke: #d4141e;
  stroke-width: 2;
}
.dim-red {
  stroke: #6a1030;
}
.guide {
  stroke-width: 1;
}
.guide, .tick {
  stroke: #08751f;
}
.bubbles {
  fill: none;
  stroke: #08751f;
}
.cad-text {
  font-family: "Noto Sans CJK SC", sans-serif;
  font-size: 18px;
  fill: #fff;
  text-anchor: middle;
}

/* dialog */
.dialog {
  position: absolute;
  right: 5px;
  top: 152px;
  width: 523px;
  margin: 0;
  background: #efefef;
  border-bottom: 1px solid #ccc;
}
.dialog-title {
  display: flex;
  align-items: center;
  justify-content: space-between;
  height: 27px;
  padding: 0 9px;
  color: #fff;
  background: #2b7fe0;
}
.dialog-close {
  display: flex;
}
.dialog-body {
  padding: 13px 11px 10px 12px;
}
.options {
  display: flex;
  gap: 6px;
}
fieldset {
  flex: 1;
  min-width: 0;
  height: 67px;
  margin: 0;
  padding: 0 10px;
  background: #fff;
  border: 1px solid #aaa;
  border-radius: 4px;
}
legend {
  margin-left: -2px;
  padding: 0;
  line-height: 14px;
}
fieldset label {
  display: flex;
  align-items: center;
  gap: 4px;
  height: 23px;
}
fieldset input {
  appearance: none;
  width: 14px;
  height: 14px;
  margin: 0;
  border: 1px solid #888;
  border-radius: 50%;
  background: #fff;
}
fieldset input:checked {
  background: radial-gradient(#4a97f0 3px, #fff 4px);
}
.section {
  display: block;
  width: 100%;
  margin-top: 6px;
  background: #000;
  fill: none;
  stroke: #fff;
}
.section text {
  font-size: 13px;
  fill: #fff;
  stroke: none;
}
.section .value {
  font-family: "Liberation Mono", monospace;
  font-size: 12px;
  fill: #2fe03c;
  text-anchor: middle;
}
.unit {
  margin: 0;
  padding: 6px 0 5px;
  text-align: right;
  border-bottom: 1px solid #8d9299;
}
.actions {
  display: flex;
  justify-content: flex-end;
  gap: 6px;
  padding-top: 6px;
}
.btn {
  width: 80px;
  height: 26px;
  background: #fff;
  border: 1px solid #c8c8c8;
  border-radius: 3px;
}
.btn.primary {
  color: #fff;
  background: #2b7fe0;
  border-color: #2b7fe0;
}

.arrows {
  position: absolute;
  left: 0;
  top: 0;
  width: 100%;
  height: 100%;
  fill: #fb3a3a;
  pointer-events: none;
}
.defs {
  position: absolute;
}
```
